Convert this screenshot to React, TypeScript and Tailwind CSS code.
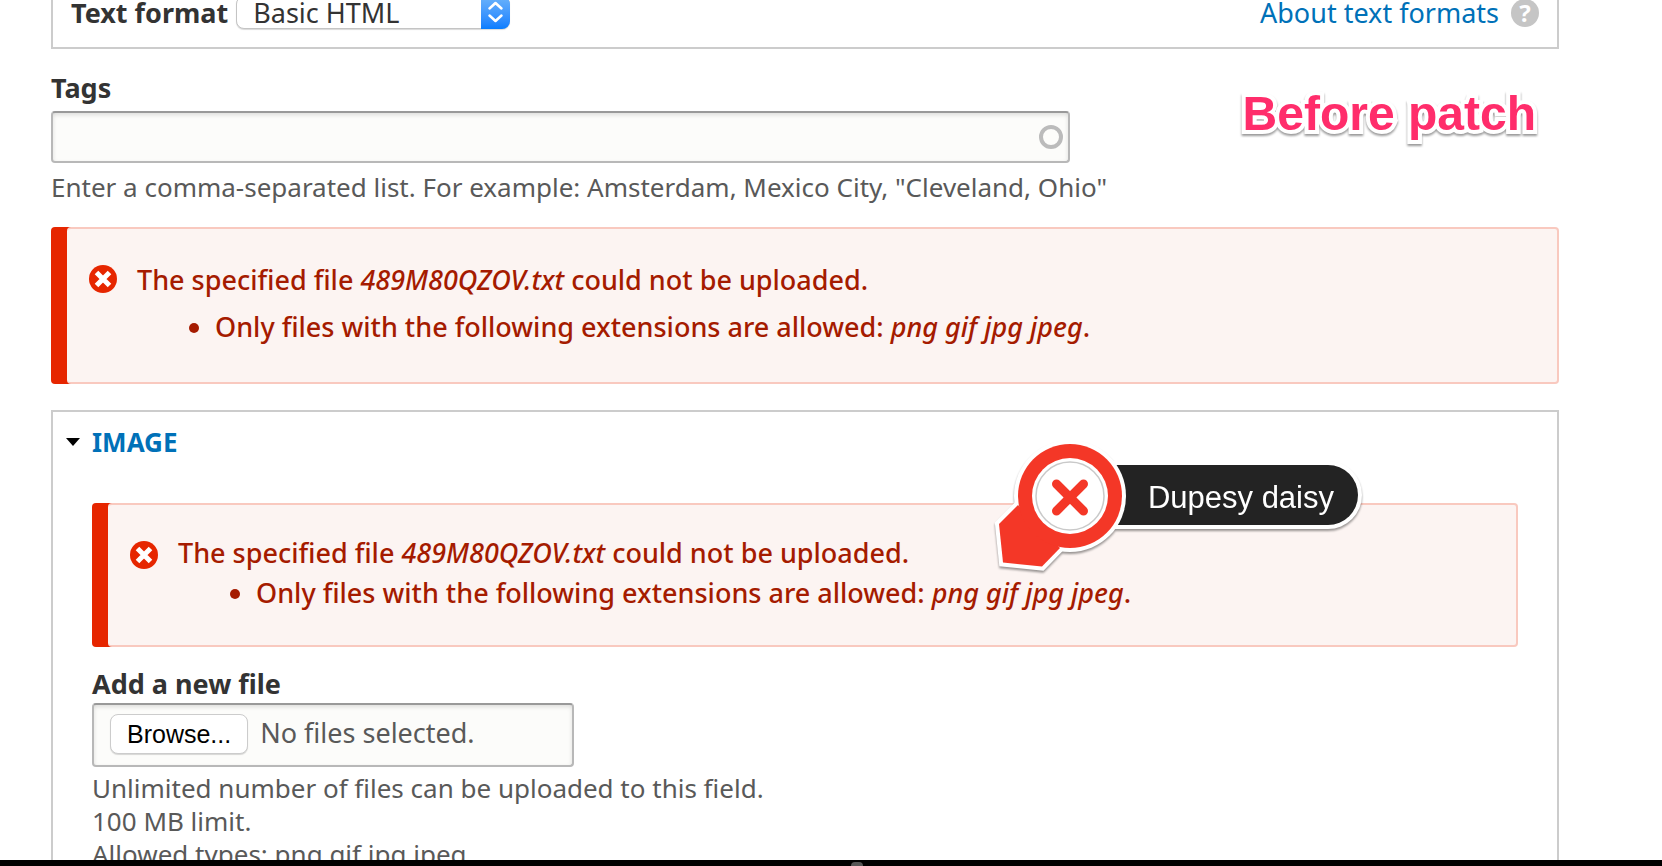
import React, { useRef, useState } from 'react';

interface UploadErrorProps {
  fileName: string;
  extensions: string;
  compact?: boolean;
}

const ErrorIcon: React.FC = () => (
  <svg viewBox="0 0 28 28" className="w-7 h-7" aria-hidden="true">
    <circle cx="14" cy="14" r="14" fill="#e62600" />
    <path d="M7.500 7.500 L20.500 20.500 M20.500 7.500 L7.500 20.500" stroke="#fff" strokeWidth="5" />
  </svg>
);

const UploadError: React.FC<UploadErrorProps> = ({ fileName, extensions, compact }) => (
  <div
    role="alert"
    className={`flex gap-5 ml-4 border-2 border-l-0 border-[#f9c9bf] rounded-sm bg-[#fcf4f2] pl-[22px] text-[27px] leading-9 font-medium text-[#a51b00] shadow-[-16px_0_0_#e62600] ${compact ? 'pt-[30px] pb-[34px]' : 'pt-[33px] pb-[37px]'}`}
  >
    <div className={`shrink-0 ${compact ? 'pt-[6px]' : 'pt-[3px]'}`}>
      <ErrorIcon />
    </div>
    <div>
      <p>
        The specified file <em>{fileName}</em> could not be uploaded.
      </p>
      <ul className={`list-disc pl-[78px] ${compact ? 'mt-1' : 'mt-[11px]'}`}>
        <li>
          Only files with the following extensions are allowed: <em>{extensions}</em>.
        </li>
      </ul>
    </div>
  </div>
);

const Callout: React.FC<{ text: string }> = ({ text }) => (
  <div className="absolute right-[160px] -top-[62px] flex items-start drop-shadow-[0_2px_1px_rgba(0,0,0,0.4)]">
    <svg viewBox="0 0 136 136" className="relative z-10 w-[136px] h-[136px] shrink-0" aria-hidden="true">
      <path
        d="M7 83 L26 64 L68 107 L50 125.500 L11 121.500 Z"
        fill="#fff"
        stroke="#fff"
        strokeWidth="8"
      />
      <circle cx="78" cy="55" r="56" fill="#fff" />
      <path d="M7 83 L26 64 L68 107 L50 125.500 L11 121.500 Z" fill="#f43727" />
      <circle cx="78" cy="55" r="52" fill="#f43727" />
      <circle cx="78" cy="55" r="38" fill="#fff" />
      <circle cx="78" cy="55" r="34" fill="none" stroke="#c9c9c9" strokeWidth="1.500" />
      <path d="M64.500 43 L91.500 70 M91.500 43 L64.500 70" stroke="#f43727" strokeWidth="9" strokeLinecap="round" />
    </svg>
    <span className="-ml-[58px] mt-[24px] h-[60px] pl-[78px] pr-6 rounded-r-full bg-[#232323] text-white font-[Liberation_Sans,sans-serif] text-[31px] leading-[66px] whitespace-nowrap shadow-[0_0_0_4px_#fff]">
      {text}
    </span>
  </div>
);

export default function App() {
  const [format, setFormat] = useState('basic');
  const [tags, setTags] = useState('');
  const fileRef = useRef<HTMLInputElement>(null);

  return (
    <div className="h-screen flex flex-col overflow-hidden bg-white text-[#333] font-[Noto_Sans,sans-serif]">
      <main className="flex-1 min-h-0 overflow-hidden pl-[51px] pr-[103px]">
        <div className="flex items-center justify-between border-2 border-t-0 border-[#ccc] pl-[18px] pr-[18px] pb-[18px] -mt-1">
          <div className="flex items-center gap-2">
            <label htmlFor="format" className="text-[27px] leading-8 font-bold">Text format</label>
            <div className="relative">
              <select
                id="format"
                value={format}
                onChange={(e) => setFormat(e.target.value)}
                className="appearance-none block w-[274px] h-[33px] pl-[16px] rounded-lg border border-[#c4c4c4] bg-white text-[27px] leading-8 shadow-[0_1px_1px_rgba(0,0,0,0.15)]"
              >
                <option value="basic">Basic HTML</option>
                <option value="full">Full HTML</option>
              </select>
              <span className="absolute right-0 top-0 w-[29px] h-[33px] rounded-r-lg bg-linear-to-b from-[#6bb3fa] to-[#067dff] pointer-events-none">
                <svg viewBox="0 0 29 33" className="w-full h-full" fill="none" stroke="#fff" strokeWidth="2.500" strokeLinecap="round" strokeLinejoin="round">
                  <path d="M8.500 12.500 L14.500 7 L20.500 12.500 M8.500 19.500 L14.500 25 L20.500 19.500" />
                </svg>
              </span>
            </div>
          </div>
          <a href="#formats" className="flex items-center gap-3 text-[27px] leading-8 text-[#0071b8]">
            About text formats
            <span className="w-7 h-7 rounded-full bg-[#c5c5c5] text-white text-[24px] leading-7 font-bold text-center">?</span>
          </a>
        </div>

        <div className="relative mt-[23px]">
          <label htmlFor="tags" className="block text-[27px] leading-8 font-bold">Tags</label>
          <div className="relative w-[1019px] max-w-full mt-[7px]">
            <input
              id="tags"
              type="text"
              value={tags}
              onChange={(e) => setTags(e.target.value)}
              className="block w-full h-[52px] px-4 pr-12 rounded-sm border-2 border-[#b8b8b8] border-t-[#999] bg-[#fcfcfa] text-[26px] shadow-[inset_0_2px_4px_rgba(0,0,0,0.125)]"
            />
            <span className="absolute right-[7px] top-[14px] w-6 h-6 rounded-full border-4 border-[#bbb]" />
          </div>
          <p className="mt-2 text-[26px] leading-[33px] text-[#595959]">
            Enter a comma-separated list. For example: Amsterdam, Mexico City, "Cleveland, Ohio"
          </p>
          <strong className="absolute right-[23px] top-[14px] font-[Liberation_Sans,sans-serif] text-[48px] leading-[56px] text-[#ff2d6b] [-webkit-text-stroke:8px_white] [paint-order:stroke_fill] drop-shadow-[0_2px_1px_rgba(0,0,0,0.4)]">
            Before patch
          </strong>
        </div>

        <div className="mt-[23px]">
          <UploadError fileName="489M80QZOV.txt" extensions="png gif jpg jpeg" />
        </div>

        <details open className="mt-[26px] border-2 border-[#ccc] pt-[14px] pb-10">
          <summary className="list-none flex items-center gap-3 pl-[13px] text-[26px] leading-8 font-bold text-[#0071b8] uppercase cursor-pointer">
            <svg viewBox="0 0 14 8" className="w-[14px] h-2" aria-hidden="true">
              <path d="M0 0 H14 L7 8 Z" fill="#000" />
            </svg>
            Image
          </summary>
          <div className="px-[39px] mt-[45px]">
            <div className="relative">
              <UploadError fileName="489M80QZOV.txt" extensions="png gif jpg jpeg" compact />
              <Callout text="Dupesy daisy" />
            </div>
            <label htmlFor="upload" className="block mt-[21px] text-[27px] leading-8 font-bold">Add a new file</label>
            <div className="flex items-start gap-3 w-[482px] h-16 mt-[3px] pl-4 pt-[9px] rounded-sm border-2 border-[#b8b8b8] border-t-[#999] bg-[#fcfcfa] shadow-[inset_0_2px_4px_rgba(0,0,0,0.125)]">
              <input ref={fileRef} id="upload" type="file" multiple className="hidden" />
              <button
                type="button"
                onClick={() => fileRef.current?.click()}
                className="h-10 px-4 rounded-lg border border-[#ccc] bg-white text-black font-[Liberation_Sans,sans-serif] text-[25px] leading-9 shadow-[0_1px_1px_rgba(0,0,0,0.15)]"
              >
                Browse...
              </button>
              <span className="text-[27px] leading-[38px] text-[#595959]">No files selected.</span>
            </div>
            <div className="mt-[5px] text-[26px] leading-[33px] text-[#595959]">
              <p>Unlimited number of files can be uploaded to this field.</p>
              <p>100 MB limit.</p>
              <p>Allowed types: png gif jpg jpeg.</p>
            </div>
          </div>
        </details>
      </main>
      <footer className="h-[6px] shrink-0 flex justify-center items-end bg-black">
        <span className="ml-[52px] w-3 h-1 rounded-t-sm bg-[#555]" />
      </footer>
    </div>
  );
}
